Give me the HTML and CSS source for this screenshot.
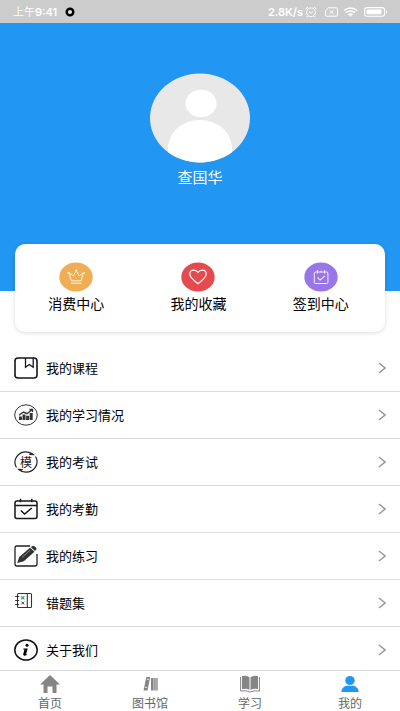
FILE: index.html
```html
<!DOCTYPE html>
<html lang="zh-CN">
<head>
<meta charset="utf-8">
<meta name="viewport" content="width=device-width, initial-scale=1">
<title>我的</title>
<link rel="stylesheet" href="styles.css">
</head>
<body>
<div class="app">
  <header class="status">
    <span class="status-group"><span class="period">上午</span><span>9:41</span>
      <svg class="dot" width="10" height="10" viewBox="0 0 10 10"><circle cx="5" cy="5" r="3.3" fill="#ddd" stroke="#000" stroke-width="2.4"/></svg>
    </span>
    <span class="status-group status-right">
      <span>2.8K/s</span>
      <svg class="alarm" width="12" height="12" viewBox="0 0 12 12" fill="none" stroke="#fff"><circle cx="6" cy="6.3" r="4.4"/><path d="M.6 3 3 1M11.4 3 9 1M2.8 10 1.6 11.3M9.2 10l1.200 1.300M4 5.600l2 1.600 2-1.600"/></svg>
      <svg class="sim" width="13" height="10" viewBox="0 0 13 10" fill="none" stroke="#fff"><path d="M3.5.8h8q1 0 1 1v6.400q0 1-1 1h-10q-1 0-1-1V3.600z"/><path d="m4.600 3.300 4 3.600m0-3.600-4 3.600"/></svg>
      <svg class="wifi" width="15" height="10" viewBox="0 0 15 10" fill="none" stroke="#fff" stroke-width="1.5"><path d="M.8 3.500q6.700-5 13.400 0M3 5.700q4.500-3.200 9 0M5.200 7.700q2.300-1.500 4.600 0"/><path d="m6 8.200 1.500 1.600L9 8.200z" fill="#fff" stroke="none"/></svg>
      <svg width="24" height="10" viewBox="0 0 24 10"><rect x=".6" y=".6" width="20" height="8.6" rx="2.4" fill="none" stroke="#fff" stroke-width="1.1"/><rect x="2.5" y="2.5" width="15" height="4.8" rx="1" fill="#fff"/><path d="M22 3.200h.6q1 1.700 0 3.400H22z" fill="#fff"/></svg>
    </span>
  </header>

  <main class="content">
    <section class="profile">
      <svg class="avatar" width="100" height="90" viewBox="0 0 100 90">
        <defs><clipPath id="face"><ellipse cx="50" cy="45" rx="50" ry="44.5"/></clipPath></defs>
        <g clip-path="url(#face)"><path fill="#e8e8e8" d="M0 0h100v90H0z"/><ellipse cx="51" cy="30.500" rx="15.500" ry="13.700" fill="#fff"/><path fill="#fff" d="M18 77C18 58 33 47 50 47s32 11 32 30v13H18z"/></g>
      </svg>
      <h1 class="name">查国华</h1>
    </section>

    <section class="card">
      <a class="shortcut" href="#spend">
        <svg width="34" height="30" viewBox="0 0 34 30"><ellipse cx="17" cy="15" rx="16.700" ry="14.600" fill="#f0ae54"/><path d="M12.300 18.800 10 10.800l4.200 3L17.200 9l3 4.800 4.200-3-2.300 8zM12 21.200h10.600" fill="none" stroke="#fff3df" stroke-linejoin="round"/><g fill="#fff3df"><circle cx="9.400" cy="10.800" r=".9"/><circle cx="17.200" cy="8.500" r="1"/><circle cx="25" cy="10.800" r=".9"/></g></svg>
        <span>消费中心</span>
      </a>
      <a class="shortcut" href="#favorites">
        <svg width="34" height="30" viewBox="0 0 34 30"><ellipse cx="17" cy="15" rx="16.700" ry="14.600" fill="#e54b4e"/><path d="M17 21.700C12.500 18.200 8.800 15.500 8.800 12c0-2.300 1.700-3.900 3.900-3.900 1.900 0 3.200.8 4.300 2.300 1.100-1.500 2.400-2.300 4.300-2.300 2.200 0 3.900 1.600 3.900 3.900 0 3.500-3.700 6.200-8.200 9.700z" fill="none" stroke="#fff" stroke-width="1.200"/></svg>
        <span>我的收藏</span>
      </a>
      <a class="shortcut" href="#checkin">
        <svg width="34" height="30" viewBox="0 0 34 30"><ellipse cx="17" cy="15" rx="16.700" ry="14.600" fill="#9876e8"/><g fill="none" stroke="#f4edff"><rect x="10.300" y="10" width="13.600" height="11.500" rx="1"/><path d="M13.500 8v3.500M17 8.800v1.800M20.600 8v3.500M13.500 15.500l2.600 2.600 4.800-4.300" stroke-width="1.100"/></g></svg>
        <span>签到中心</span>
      </a>
    </section>

    <nav class="menu" aria-label="个人中心">
      <a class="row" href="#courses">
        <svg class="row-icon" viewBox="0 0 24 22" fill="none" stroke="#161616" stroke-width="1.600"><rect x="1" y="1" width="22" height="20" rx="3"/><path d="M11.500 1v9.200L15.300 7.500l3.900 2.700V1" stroke-width="1.300"/></svg>
        <span class="row-label">我的课程</span><svg class="arrow" viewBox="0 0 8 12"><path d="m1 1 6 5-6 5"/></svg>
      </a>
      <a class="row" href="#progress">
        <svg class="row-icon" viewBox="0 0 24 22"><ellipse cx="12" cy="11" rx="11.300" ry="10.200" fill="none" stroke="#333"/><g fill="#333"><path d="M5 12.500h2.900V16H5zM8.500 10.500h3V16h-3zM12.100 11.700h3V16h-3zM15.700 9h3v7h-3z"/></g><path d="m5 11.200 4.500-3.200 3.500 1.700 5-4M15.500 5.500h3V8" fill="none" stroke="#333" stroke-width="1.400"/></svg>
        <span class="row-label">我的学习情况</span><svg class="arrow" viewBox="0 0 8 12"><path d="m1 1 6 5-6 5"/></svg>
      </a>
      <a class="row" href="#exams">
        <svg class="row-icon" viewBox="0 0 24 22"><path d="M2.500 16.500C-2 9 4 .8 12 .8c3 0 5.200.8 7.200 2.700l-4-.2M21.500 5.500c4.500 7.500-1.500 15.700-9.500 15.700-3 0-5.200-.8-7.200-2.700l4 .2" fill="none" stroke="#222" stroke-width="1.200"/><text class="mock" x="12" y="15.500" text-anchor="middle">模</text></svg>
        <span class="row-label">我的考试</span><svg class="arrow" viewBox="0 0 8 12"><path d="m1 1 6 5-6 5"/></svg>
      </a>
      <a class="row" href="#attendance">
        <svg class="row-icon" viewBox="0 0 24 22" fill="none" stroke="#161616" stroke-width="1.500"><rect x="1" y="3" width="22" height="17.500" rx="2"/><path d="M1 7.500h22M6.500.8v3.500M17.800.8v3.500M6.800 12.500l3.800 3.500 7.200-6"/></svg>
        <span class="row-label">我的考勤</span><svg class="arrow" viewBox="0 0 8 12"><path d="m1 1 6 5-6 5"/></svg>
      </a>
      <a class="row" href="#practice">
        <svg class="row-icon" viewBox="0 0 24 22"><path d="M16 1H3Q1 1 1 3v16q0 2 2 2h18q2 0 2-2V9" fill="none" stroke="#222" stroke-width="1.300"/><path fill="#333" d="m3.200 18 2-6L16 2.800l4.500 4L9.800 16.300zM16.800 2.300l1.300-1.100q1.200-.8 2.300.1l1.700 1.500q1 1 0 2L21 5.900z"/><path d="m8 12.500 8-7.200" stroke="#ddd" stroke-width=".5"/></svg>
        <span class="row-label">我的练习</span><svg class="arrow" viewBox="0 0 8 12"><path d="m1 1 6 5-6 5"/></svg>
      </a>
      <a class="row" href="#mistakes">
        <svg class="row-icon" viewBox="0 0 24 22" fill="none" stroke="#333" stroke-width="1.100"><rect x="3.500" y="1.500" width="14" height="14" rx="1"/><path d="M13.300 1.500v14M1.200 4.500h4M1.200 8.500h4M1.200 12.500h4"/><path stroke="#27977a" stroke-width="1.100" d="m7.200 4.200 3.200 3.200m0-3.200-3.200 3.200"/><path stroke-width="1" d="m7.400 9.600 2.800 2.800m0-2.800-2.800 2.800"/></svg>
        <span class="row-label">错题集</span><svg class="arrow" viewBox="0 0 8 12"><path d="m1 1 6 5-6 5"/></svg>
      </a>
      <a class="row" href="#about">
        <svg class="row-icon" viewBox="0 0 24 22"><ellipse cx="12" cy="11" rx="11.200" ry="10" fill="none" stroke="#111" stroke-width="1.500"/><circle cx="13" cy="6.300" r="1.500"/><path d="M9.500 9.500h4.200l-1.600 5.400q-.3 1 1.700-.5-1.500 2.600-3.600 2.300-1.400-.3-.9-1.900l1.200-4.200H9.200z"/></svg>
        <span class="row-label">关于我们</span><svg class="arrow" viewBox="0 0 8 12"><path d="m1 1 6 5-6 5"/></svg>
      </a>
    </nav>
  </main>

  <nav class="tabs" aria-label="主导航">
    <a class="tab" href="#home">
      <svg width="20" height="18" viewBox="0 0 20 18" fill="#858585"><path d="M10 0 0 9.500h3.500V18h4v-6.500h5V18h4V9.500H20z"/></svg>
      <span>首页</span>
    </a>
    <a class="tab" href="#library">
      <svg width="20" height="18" viewBox="0 0 20 18" fill="#858585"><path d="M6.300 2h3.900L7.500 15.500H3.500z"/><path d="m7 4.200 1.700.1M5 12.300l1.600.1" stroke="#fff"/><path d="M11 3h2v12.500h-2zM13.400 3h1.400v12.500h-1.400z"/><path fill="#aaa" d="M15 3h3v12.500h-3z"/></svg>
      <span>图书馆</span>
    </a>
    <a class="tab" href="#study">
      <svg width="20" height="18" viewBox="0 0 20 18" fill="#858585"><path d="M2 1q5-1 7.500 1.300V15Q7 13 2 14zM18 1q-5-1-7.500 1.300V15q2.500-2 7.500-1z"/><path d="M.6 2v14q6-.8 9.400 1 3.400-1.800 9.400-1V2" fill="none" stroke="#858585"/></svg>
      <span>学习</span>
    </a>
    <a class="tab" href="#me" aria-current="page">
      <svg width="20" height="18" viewBox="0 0 20 18" fill="#2196f3"><ellipse cx="10" cy="5.500" rx="4.700" ry="4.600"/><path d="M1.200 17q.5-5.500 6.300-6.500 2.500 1 5 0 5.800 1 6.300 6.500z"/></svg>
      <span>我的</span>
    </a>
  </nav>
</div>
</body>
</html>
```
FILE: styles.css
```css
* { box-sizing: border-box; }

body {
  margin: 0;
  font-family: "Noto Sans CJK SC", sans-serif;
  color: #111;
  background: #fff;
}

a { color: inherit; text-decoration: none; }
svg { display: block; flex: none; }

.app {
  display: flex;
  flex-direction: column;
  height: 100vh;
}

.status {
  display: flex;
  flex: none;
  align-items: center;
  justify-content: space-between;
  height: 23px;
  padding: 0 12px 0 13px;
  background: #ccc;
  color: #fff;
  font-family: Inter, "Noto Sans CJK SC", sans-serif;
  font-size: 11px;
  font-weight: 600;
  line-height: 16px;
}

.status-group { display: flex; align-items: center; }
.period { font-weight: 400; }
.dot { margin-left: 8px; }
.alarm { margin-left: 2px; }
.sim { margin-left: 8px; }
.wifi { margin: 0 6px 0 5px; }

.content {
  flex: 1;
  min-height: 0;
  overflow: hidden;
}

.profile {
  display: flex;
  flex-direction: column;
  align-items: center;
  height: 268px;
  padding-top: 50px;
  background: #2196f3;
}

.name {
  margin: 2px 0 0;
  color: #fff;
  font-size: 15px;
  font-weight: 400;
  line-height: 24px;
}

.card {
  position: relative;
  display: grid;
  grid-template-columns: repeat(3, 1fr);
  margin: -47px 15px 13px;
  padding: 18px 3px 18px 0;
  border-radius: 10px;
  background: #fff;
  box-shadow: 0 1px 4px rgba(0, 0, 0, 0.15);
}

.shortcut {
  display: flex;
  flex-direction: column;
  align-items: center;
  font-size: 14px;
  line-height: 22px;
  color: #000;
}

.row {
  display: flex;
  align-items: center;
  gap: 8px;
  height: 47px;
  padding: 0 14px;
  border-bottom: 1px solid #ddd;
  font-size: 13px;
  color: #000;
}

.row-icon { width: 24px; height: 22px; }
.row-label { padding-bottom: 2px; }

.mock {
  font-size: 12px;
  fill: #222;
}

.arrow {
  width: 8px;
  height: 12px;
  margin-left: auto;
  fill: none;
  stroke: #999;
  stroke-width: 1.5px;
}

.tabs {
  display: grid;
  flex: none;
  grid-template-columns: repeat(4, 1fr);
  height: 41px;
  border-top: 1px solid #ddd;
  background: #fff;
}

.tab {
  display: flex;
  flex-direction: column;
  align-items: center;
  padding-top: 4px;
  color: #666;
  font-size: 12px;
  line-height: 20px;
}
```
